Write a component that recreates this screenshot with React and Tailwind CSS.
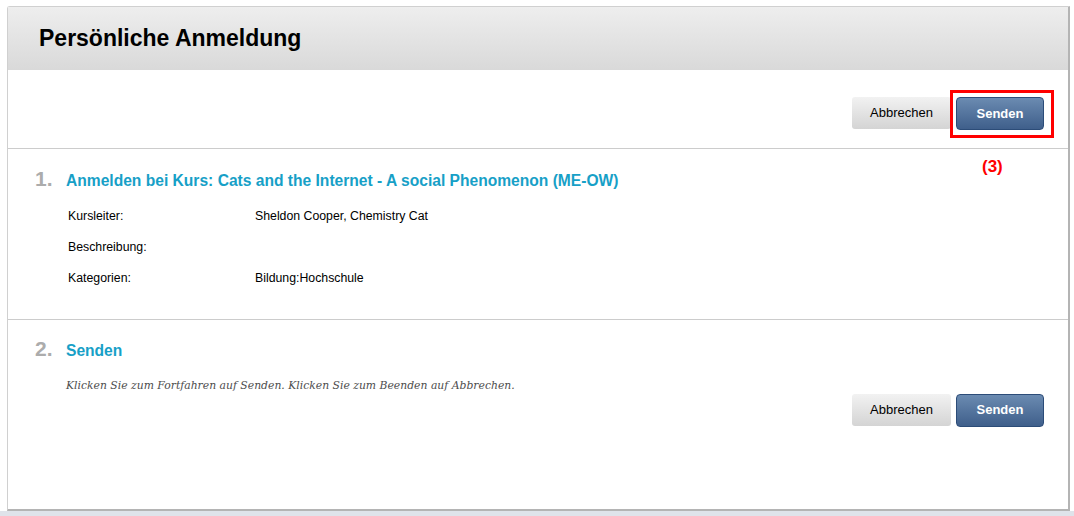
import React from 'react';

const sans = { fontFamily: '"Liberation Sans", Arial, sans-serif' };

const CancelButton = () => (
  <button className="h-[32px] w-[99px] rounded-[3px] bg-gradient-to-b from-[#f2f2f2] to-[#d4d4d4] text-[13px] text-black">
    Abbrechen
  </button>
);

const SendButton = () => (
  <button className="h-[33px] w-[88px] rounded-[4px] border border-[#2c4c78] bg-gradient-to-b from-[#6b8bb1] to-[#3f5f8b] text-[13px] font-bold text-white">
    Senden
  </button>
);

const StepTitle = ({ num, children }) => (
  <div className="flex items-baseline">
    <span className="w-[31px] text-[21px] font-bold text-[#acacac]">{num}.</span>
    <h3 className="text-[15.6px] font-bold text-[#17a0c7]">{children}</h3>
  </div>
);

const details = [
  ['Kursleiter:', 'Sheldon Cooper, Chemistry Cat'],
  ['Beschreibung:', ''],
  ['Kategorien:', 'Bildung:Hochschule'],
];

export default function App() {
  return (
    <div className="flex h-[516px] w-[1074px] flex-col bg-white" style={sans}>
      <div className="pl-[7px] pt-[6px]">
        <div className="flex h-[505px] w-[1063px] flex-col rounded-tl-[3px] border-t border-l border-[#d0d0d0] border-r-2 border-b-2 border-r-[#b4b4b4] border-b-[#b4b4b4] bg-white">
          <div className="flex h-[63px] items-center bg-gradient-to-b from-[#eeeeee] to-[#d9d9d9] pl-[31px]">
            <h1 className="text-[23px] font-bold text-black">Persönliche Anmeldung</h1>
          </div>

          <div className="flex h-[79px] items-start justify-end gap-[5px] border-b border-[#cccccc] pr-[24px] pt-[27px]">
            <CancelButton />
            <div className="relative">
              <SendButton />
              <div className="pointer-events-none absolute -left-[6px] -top-[7px] h-[48px] w-[104px] border-[3px] border-[#ff0000]" />
              <span className="absolute left-[26px] top-[57px] text-[17px] font-bold text-[#ff0000]">(3)</span>
            </div>
          </div>

          <div className="h-[171px] border-b border-[#cccccc] pl-[27px] pt-[14px]">
            <StepTitle num="1">Anmelden bei Kurs: Cats and the Internet - A social Phenomenon (ME-OW)</StepTitle>
            <div className="mt-[15px] flex flex-col gap-[17px] pl-[33px] text-[12.3px] text-black">
              {details.map(([label, value]) => (
                <div key={label} className="flex h-[14px] items-center">
                  <span className="w-[187px]">{label}</span>
                  <span>{value}</span>
                </div>
              ))}
            </div>
          </div>

          <div className="flex-1 pl-[27px] pr-[24px] pt-[13px]">
            <StepTitle num="2">Senden</StepTitle>
            <p
              className="mt-[13px] pl-[31px] italic text-[#4d4d4d]"
              style={{ fontFamily: '"DejaVu Serif", Georgia, serif', fontSize: '10.8px' }}
            >
              Klicken Sie zum Fortfahren auf Senden. Klicken Sie zum Beenden auf Abbrechen.
            </p>
            <div className="flex items-center justify-end gap-[5px]">
              <CancelButton />
              <SendButton />
            </div>
          </div>
        </div>
      </div>
      <div className="flex-1 bg-[#dfe3ea]" />
    </div>
  );
}
